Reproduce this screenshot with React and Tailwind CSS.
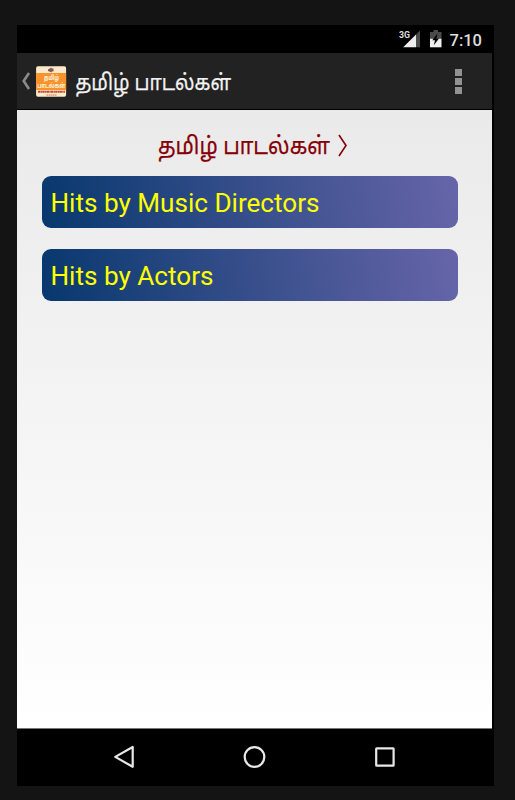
const TAMIL = "தமிழ் பாடல்கள்";

function StatusBar() {
  return (
    <div className="flex h-7 shrink-0 justify-end bg-black">
      <svg className="h-7 w-[96px]" viewBox="398 25 96 28">
        <text x="399" y="38.3" fontSize="9.5" fontWeight="700" fill="#dedede" textLength="11" lengthAdjust="spacingAndGlyphs" className="font-['Roboto',sans-serif]">3G</text>
        <path d="M420 30.5V47.3H416V34.5Z" fill="#4b4b4b" />
        <path d="M416 34.5V47.3H403.2Z" fill="#eeeeee" />
        <path d="M430 32H433.5V30H438V32H441.5V38.7H430Z" fill="#4b4b4b" />
        <path d="M430 38.7H441.5V47.3H430Z" fill="#f0f0f0" />
        <path d="M437.5 33.5L432.3 40.2H435L433.8 45.3L439 38.5H436.3Z" fill="#000" />
        <text x="449.5" y="45.5" fontSize="17" fontWeight="500" fill="#dedede" textLength="32.5" lengthAdjust="spacingAndGlyphs" className="font-['Roboto',sans-serif]">7:10</text>
      </svg>
    </div>
  );
}

function AppIcon() {
  return (
    <svg className="h-[31px] w-[31px] overflow-visible" viewBox="0 0 31 31">
      <rect x="0.1" y="0.3" width="30" height="30.4" rx="1.8" fill="#fbe9cb" />
      <rect x="0.1" y="7" width="30" height="17" fill="#fa922b" />
      <path d="M12 3.5L15.5 1.5V6.5L12 5Z" fill="#6d625a" />
      <rect x="15" y="2.5" width="2.5" height="3" fill="#a34b3b" />
      <g fill="#fff4df" fontWeight="700" className="font-['Noto_Sans_Tamil','Noto_Sans',sans-serif]">
        <text x="8" y="13.5" fontSize="6.6" textLength="15" lengthAdjust="spacingAndGlyphs">தமிழ்</text>
        <text x="1.2" y="21.5" fontSize="6.6" textLength="28" lengthAdjust="spacingAndGlyphs">பாடல்கள்</text>
      </g>
      <path d="M2 25.7H29" stroke="#c4472f" strokeWidth="2" strokeDasharray="2.4 .4 1.2 .3" />
      <path d="M10.5 29H20.5" stroke="#d66a4c" strokeWidth="1.2" strokeDasharray="1.6 .5" />
    </svg>
  );
}

function AppBar() {
  return (
    <div className="flex h-[57px] shrink-0 items-center border-b border-black bg-[#222222] pl-1">
      <svg className="h-[18px] w-[10px]" viewBox="0 0 10 18">
        <path d="M8 1L2.7 9L8 17" fill="none" stroke="#8b8b8b" strokeWidth="2.6" />
      </svg>
      <div className="ml-[5px] flex"><AppIcon /></div>
      <svg className="ml-[7px] h-14 w-[162px] overflow-visible" viewBox="0 0 162 56">
        <text x="1.5" y="36.5" fontSize="22" fill="#f3f3f3" stroke="#f3f3f3" strokeWidth=".25" textLength="155.5" lengthAdjust="spacingAndGlyphs" className="font-['Noto_Sans_Tamil','Noto_Sans',sans-serif]">{TAMIL}</text>
      </svg>
      <div className="mr-[30px] ml-auto flex flex-col gap-[2px]">
        <div className="h-[7px] w-[7px] bg-[#929292]" />
        <div className="h-[7px] w-[7px] bg-[#929292]" />
        <div className="h-[7px] w-[7px] bg-[#929292]" />
      </div>
    </div>
  );
}

function ListButton({ label, width }) {
  return (
    <button className="flex h-[52px] w-[416px] items-center rounded-[9px] bg-linear-[80deg,#07386d,#6765aa] text-left">
      <svg className="h-[50px] w-[400px]" viewBox="0 0 400 50">
        <text x="8.5" y="35.2" fontSize="26.4" fill="#ffff00" textLength={width} lengthAdjust="spacingAndGlyphs" className="font-['Roboto',sans-serif]">{label}</text>
      </svg>
    </button>
  );
}

function NavBar() {
  return (
    <div className="flex h-[57px] shrink-0 bg-black">
      <svg className="h-[57px] w-[477px]" viewBox="17 729 477 57" fill="none" stroke="#e8e8e8" strokeWidth="2.2">
        <path d="M132.7 747V766.8L115.3 756.9Z" strokeLinejoin="round" />
        <circle cx="254.5" cy="757" r="9.8" />
        <rect x="376.2" y="748.3" width="17.4" height="17.4" rx=".5" />
      </svg>
    </div>
  );
}

export default function App() {
  return (
    <div className="h-[800px] w-[515px] overflow-hidden bg-[#141414] pt-[25px] pl-[17px]">
      <div className="flex h-[761px] w-[477px] flex-col bg-black">
        <StatusBar />
        <div className="flex h-[676px] w-[475px] flex-col">
          <AppBar />
          <main className="flex flex-1 flex-col border-b border-[#777777] bg-linear-to-b from-[#eaeaea] to-white pl-[25px]">
            <svg className="h-[66px] w-[416px] shrink-0" viewBox="42 110 416 66">
              <text x="158" y="154.3" fontSize="24" fill="#850006" stroke="#850006" strokeWidth=".25" textLength="172" lengthAdjust="spacingAndGlyphs" className="font-['Noto_Sans_Tamil','Noto_Sans',sans-serif]">{TAMIL}</text>
              <path d="M339 135L346 145.5L339 156" fill="none" stroke="#850006" strokeWidth="1.6" />
            </svg>
            <div className="flex flex-col gap-[21px]">
              <ListButton label="Hits by Music Directors" width={269} />
              <ListButton label="Hits by Actors" width={163} />
            </div>
          </main>
        </div>
        <NavBar />
      </div>
    </div>
  );
}
